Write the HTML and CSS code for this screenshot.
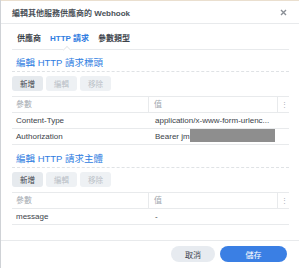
FILE: index.html
```html
<!DOCTYPE html>
<html lang="zh-Hant">
<head>
  <meta charset="UTF-8" />
  <title>編輯其他服務供應商的 Webhook</title>
  <link rel="stylesheet" href="styles.css">
</head>
<body>
  <div class="dialog">
    <div class="dialog-header">
      <div class="dialog-title">編輯其他服務供應商的 Webhook</div>
      <svg class="close" width="7" height="7" viewBox="0 0 7 7">
        <path d="M1 1 L6 6 M6 1 L1 6" stroke="#8a8f96" stroke-width="1.4" />
      </svg>
    </div>

    <div class="dialog-body">
      <div class="tabs">
        <div class="tab">供應商</div>
        <div class="tab active">HTTP 請求</div>
        <div class="tab">參數類型</div>
      </div>

      <div class="section-title">編輯 HTTP 請求標頭</div>
      <div class="toolbar">
        <button class="btn">新增</button>
        <button class="btn disabled">編輯</button>
        <button class="btn disabled">移除</button>
      </div>
      <div class="grid">
        <div class="row head">
          <div class="cell key">參數</div>
          <div class="cell val">值</div>
          <div class="cell menu">⋮</div>
        </div>
        <div class="row">
          <div class="cell key">Content-Type</div>
          <div class="cell val">application/x-www-form-urlenc...</div>
        </div>
        <div class="row">
          <div class="cell key">Authorization</div>
          <div class="cell val">Bearer jm<span class="redact"></span></div>
        </div>
      </div>

      <div class="section-title second">編輯 HTTP 請求主體</div>
      <div class="toolbar">
        <button class="btn">新增</button>
        <button class="btn disabled">編輯</button>
        <button class="btn disabled">移除</button>
      </div>
      <div class="grid">
        <div class="row head">
          <div class="cell key">參數</div>
          <div class="cell val">值</div>
          <div class="cell menu">⋮</div>
        </div>
        <div class="row">
          <div class="cell key">message</div>
          <div class="cell val">-</div>
        </div>
      </div>
    </div>

    <div class="dialog-footer">
      <button class="pill cancel">取消</button>
      <button class="pill save">儲存</button>
    </div>
  </div>
</body>
</html>
```

FILE: styles.css
```css
body {
  margin: 0;
  padding: 0;
  background: #fff;
  font-family: 'Liberation Sans', 'Noto Sans CJK TC', sans-serif;
  font-size: 8px;
  color: #3c434a;
}
.dialog {
  width: 299px;
  height: 268px;
  border-left: 1px solid #cfd2d6;
  display: flex;
  flex-direction: column;
  background: #fff;
  box-sizing: border-box;
}
.dialog-header {
  flex: none;
  display: flex;
  align-items: center;
  justify-content: space-between;
  padding: 0 12px 0 11px;
  border-top: 1px solid #eadfcf;
  border-bottom: 1px solid #e8eaec;
  box-sizing: border-box;
  height: 24px;
}
.dialog-title {
  font-weight: bold;
  color: #4a5057;
  font-size: 8px;
}
.close {
  display: block;
}
.dialog-body {
  flex: 1;
  padding: 0 10px 0 11px;
}
.tabs {
  display: flex;
  height: 25px;
  gap: 9px;
  padding-left: 5px;
  border-bottom: 1px solid #e8eaec;
}
.tab {
  position: relative;
  height: 25px;
  line-height: 29px;
  font-weight: bold;
  font-size: 8px;
  color: #3c434a;
}
.tab.active {
  color: #2f7de1;
}
.tab.active::after {
  content: "";
  position: absolute;
  left: 14px;
  bottom: -4px;
  width: 5px;
  height: 5px;
  background: #fff;
  border-left: 1px solid #e8eaec;
  border-top: 1px solid #e8eaec;
  transform: rotate(45deg);
}
.section-title {
  margin-top: 4px;
  height: 17px;
  line-height: 17px;
  padding-left: 4px;
  font-size: 9.5px;
  color: #2f7de1;
  border-bottom: 1px dashed #dfe2e5;
}
.section-title.second {
  margin-top: 5px;
}
.toolbar {
  display: flex;
  gap: 3px;
  margin-top: 4px;
}
.btn {
  width: 31px;
  height: 15px;
  padding: 0;
  border: none;
  border-radius: 3px;
  background: #e6eaee;
  color: #3c434a;
  font-family: inherit;
  font-size: 7.5px;
}
.btn.disabled {
  background: #eef1f4;
  color: #b9bfc6;
}
.grid {
  margin-top: 5px;
  border-top: 1px solid #e8eaec;
  width: 277px;
}
.row {
  display: flex;
  height: 15px;
  line-height: 15px;
  border-bottom: 1px solid #e8eaec;
}
.cell {
  padding-left: 4px;
  white-space: nowrap;
  overflow: hidden;
}
.key {
  width: 134px;
}
.val {
  width: 125px;
  padding-left: 5px;
}
.head .cell {
  color: #a3a9b0;
}
.head .val {
  border-left: 1px solid #e8eaec;
}
.menu {
  width: 8px;
  padding-left: 3px;
  border-left: 1px solid #e8eaec;
  font-size: 7px;
}
.redact {
  display: inline-block;
  width: 85px;
  height: 13px;
  vertical-align: -3px;
  background: #8e8e8e;
}
.dialog-footer {
  flex: none;
  height: 28px;
  border-top: 1px solid #e8eaec;
  box-sizing: border-box;
  display: flex;
  justify-content: flex-end;
  align-items: flex-start;
  gap: 5px;
  padding: 5px 12px 0 0;
}
.pill {
  height: 16px;
  border: none;
  border-radius: 8px;
  font-family: inherit;
  font-size: 8px;
  padding: 0;
}
.cancel {
  width: 44px;
  background: #e7ebf0;
  color: #3c434a;
}
.save {
  width: 67px;
  background: #3a7fe4;
  color: #fff;
}
```
